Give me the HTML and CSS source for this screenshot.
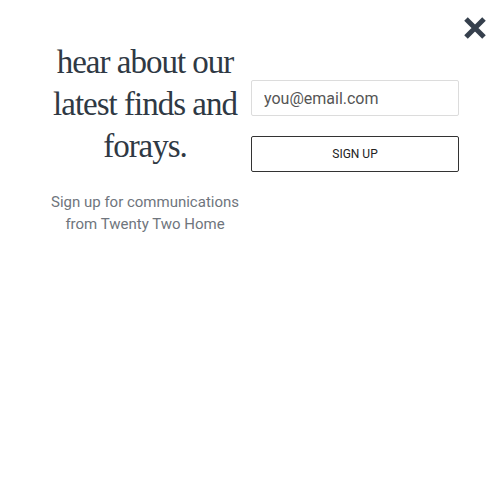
FILE: index.html
```html
<!DOCTYPE html>
<html lang="en">
<head>
    <meta charset="UTF-8">
    <meta name="viewport" content="width=device-width, initial-scale=1.0">
    <title>Sign up</title>
    <link rel="stylesheet" href="styles.css">
</head>
<body>
    <div class="popup">
        <button class="close-btn" aria-label="Close">
            <svg width="24" height="24" viewBox="0 0 24 24">
                <path d="M3 3 L21 21 M21 3 L3 21" stroke="#36404d" stroke-width="5" stroke-linecap="butt"/>
            </svg>
        </button>
        <div class="popup-body">
            <div class="intro">
                <h1>hear about our latest finds and forays.</h1>
                <p>Sign up for communications from Twenty Two Home</p>
            </div>
            <form class="signup-form">
                <input type="email" placeholder="you@email.com">
                <button type="button">Sign up</button>
            </form>
        </div>
    </div>
</body>
</html>
```

FILE: styles.css
```css
body {
    margin: 0;
    padding: 0;
    background: #fff;
    font-family: Roboto, Arial, sans-serif;
}
.popup {
    position: relative;
    width: 500px;
    height: 500px;
}
.close-btn {
    position: absolute;
    top: 16px;
    right: 13px;
    padding: 0;
    border: none;
    background: none;
    cursor: pointer;
}
.close-btn svg {
    display: block;
}
.popup-body {
    display: flex;
    align-items: flex-start;
    gap: 6px;
    padding: 41px 0 0 45px;
}
.intro {
    width: 200px;
    text-align: center;
}
.intro h1 {
    margin: 0;
    font-family: "Liberation Serif", "Times New Roman", serif;
    font-weight: normal;
    font-size: 33px;
    line-height: 42px;
    letter-spacing: -1px;
    color: #2f3944;
}
.intro p {
    margin: 24px 0 0;
    font-size: 15px;
    line-height: 22px;
    color: #6f757d;
}
.signup-form {
    display: flex;
    flex-direction: column;
    gap: 20px;
    width: 208px;
    padding-top: 39px;
}
.signup-form input {
    box-sizing: border-box;
    width: 100%;
    height: 36px;
    padding: 0 12px;
    border: 1px solid #dcdcdc;
    border-radius: 2px;
    font-family: Roboto, Arial, sans-serif;
    font-size: 16px;
    color: #444;
}
.signup-form input::placeholder {
    color: #555;
}
.signup-form button {
    box-sizing: border-box;
    width: 100%;
    height: 36px;
    border: 1px solid #333;
    border-radius: 2px;
    background: #fff;
    font-family: Roboto, Arial, sans-serif;
    font-size: 12px;
    text-transform: uppercase;
    color: #222;
    cursor: pointer;
}
```
